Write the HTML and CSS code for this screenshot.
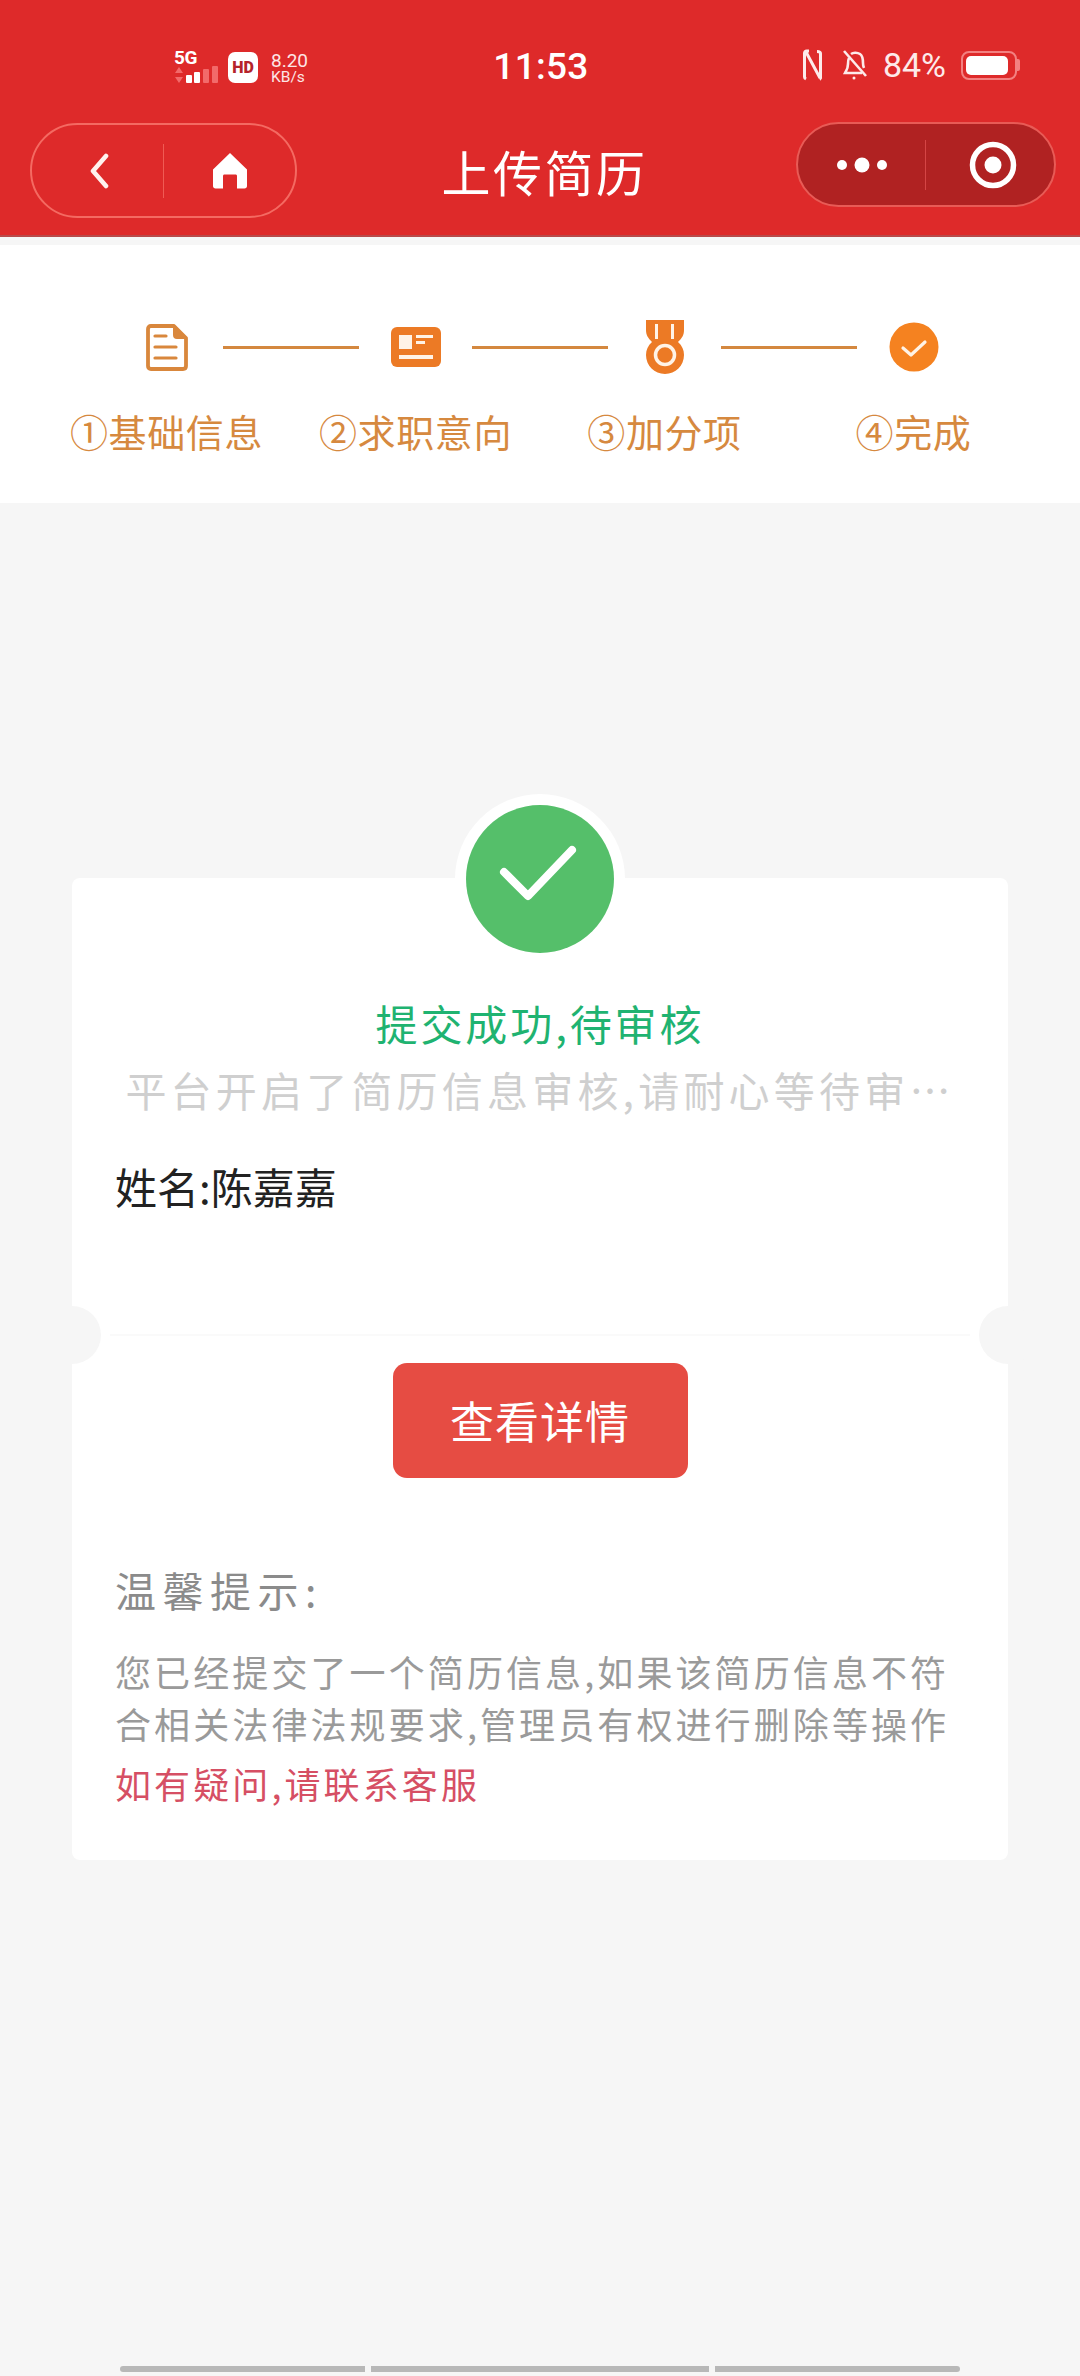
FILE: index.html
```html
<!DOCTYPE html>
<html lang="zh-CN">
<head>
<meta charset="utf-8">
<title>上传简历</title>
<link rel="stylesheet" href="styles.css">
</head>
<body>
<div class="page">
  <header class="header">
    <div class="status">
      <div class="status-left">
        <div class="net">
          <span class="net-label">5G</span>
          <svg class="net-bars" width="46" height="18" viewBox="0 0 46 18"><path d="M5 1l4 6H1zM5 17l4-6H1z" fill="#f26a6a"/><rect x="12" y="9" width="6" height="8" rx="1" fill="#fff"/><rect x="20" y="6" width="6" height="11" rx="1" fill="#fff"/><rect x="29" y="3" width="6" height="14" rx="1" fill="#f26a6a"/><rect x="38" y="0" width="6" height="17" rx="1" fill="#f26a6a"/></svg>
        </div>
        <span class="hd">HD</span>
        <div class="speed"><span class="speed-num">8.20</span><span class="speed-unit">KB/s</span></div>
      </div>
      <div class="time">11:53</div>
      <div class="status-right">
        <svg class="nfc" width="20" height="32" viewBox="0 0 20 32" fill="none" stroke="#fdeaea" stroke-width="3"><path d="M6 2H3.500C2.500 2 1.500 3 1.500 4v24c0 1 .5 1.500 1.500 2M3 3l14 26M14 2.500c1.500 0 3.500.5 3.500 2v23c0 1.500 0 2.500 .8 3"/></svg>
        <svg class="bell" width="26" height="30" viewBox="0 0 26 30" fill="none" stroke="#fdeaea" stroke-width="2.600"><path d="M2 1l22 25"/><path d="M7 8c-1 2-1 3-1 6 0 5-2 7-3 9h17M9 4c2-1.500 6-2 9 0 3 2 3 6 3 9 0 2 0 3 1 5"/><circle cx="12" cy="28" r="1.500" fill="#fdeaea" stroke="none"/></svg>
        <span class="pct">84%</span>
        <div class="battery"><span class="battery-fill"></span></div>
        <span class="battery-tip"></span>
      </div>
    </div>
    <nav class="nav">
      <div class="capsule-left">
        <span class="cap-cell cap-cell-first">
          <svg width="20" height="36" viewBox="0 0 20 36" fill="none" stroke="#fff2ee" stroke-width="4.600" stroke-linecap="round" stroke-linejoin="round"><path d="M17 3L4 18l13 15"/></svg>
        </span>
        <span class="cap-cell">
          <svg width="36" height="37" viewBox="0 0 36 37"><path d="M18 1L35 17.500V34c0 1.500-1 2.500-2.500 2.500H25V24c0-1-.6-1.500-1.500-1.500h-11c-1 0-1.500.6-1.500 1.500v12.500H3.500C2 36.500 1 35.500 1 34V17.500z" fill="#fff"/></svg>
        </span>
      </div>
      <h1 class="title">上传简历</h1>
      <div class="capsule-right">
        <span class="cap-cell cap-cell-first">
          <svg width="50" height="16" viewBox="0 0 50 16" fill="#fff"><circle cx="5" cy="8" r="5"/><circle cx="25" cy="8" r="7.500"/><circle cx="45" cy="8" r="5"/></svg>
        </span>
        <span class="cap-cell">
          <svg width="48" height="48" viewBox="0 0 48 48"><circle cx="24" cy="24" r="20.500" fill="none" stroke="#fff" stroke-width="5.500"/><circle cx="24" cy="24" r="8.500" fill="#fff"/></svg>
        </span>
      </div>
    </nav>
  </header>

  <section class="steps">
    <div class="step-icons">
      <span class="step-icon">
        <svg width="42" height="47" viewBox="0 0 42 47" fill="none" stroke="#d9873c" stroke-width="3.800" stroke-linejoin="round"><path d="M5 2h23l12 12v28c0 2-1 3-3 3H5c-2 0-3-1-3-3V5c0-2 1-3 3-3z"/><path d="M28 2v9c0 2 1 3 3 3h9z" fill="#d9873c" stroke-width="2"/><path d="M9 12h11M9 23h21M9 34h21" stroke-linecap="round" stroke-width="3.200"/></svg>
      </span>
      <span class="step-line"></span>
      <span class="step-icon">
        <svg width="50" height="40" viewBox="0 0 50 40"><rect width="50" height="40" rx="6" fill="#ec7a25"/><rect x="8" y="8" width="13" height="14" fill="#fff3e6"/><rect x="25" y="8" width="17" height="3" fill="#fff3e6"/><rect x="25" y="14" width="9" height="3" fill="#fff3e6"/><rect x="8" y="28" width="34" height="4" fill="#fff3e6"/></svg>
      </span>
      <span class="step-line"></span>
      <span class="step-icon">
        <svg width="38" height="54" viewBox="0 0 38 54"><path d="M0 0h38v10c0 5-2 8-6 12 4 3.500 6 8 6 13 0 10.500-8.500 19-19 19S0 45.500 0 35c0-5 2-9.500 6-13-4-4-6-7-6-12z" fill="#ec7a25"/><rect x="9" y="4" width="3" height="15" fill="#fff3e6"/><rect x="25" y="4" width="3" height="15" fill="#fff3e6"/><circle cx="19" cy="35" r="9.500" fill="none" stroke="#fff3e6" stroke-width="3.500"/></svg>
      </span>
      <span class="step-line"></span>
      <span class="step-icon">
        <svg width="50" height="50" viewBox="0 0 50 50"><circle cx="25" cy="25" r="24.500" fill="#f58220"/><path d="M14 26l8 7 14-13" fill="none" stroke="#fff3e6" stroke-width="3.200" stroke-linecap="round" stroke-linejoin="round"/></svg>
      </span>
    </div>
    <div class="step-labels">
      <span class="step-label">①基础信息</span>
      <span class="step-label">②求职意向</span>
      <span class="step-label">③加分项</span>
      <span class="step-label">④完成</span>
    </div>
  </section>

  <main class="card">
    <span class="badge-halo"></span>
    <span class="badge">
      <svg width="78" height="56" viewBox="0 0 78 56" fill="none" stroke="#fff" stroke-width="8" stroke-linecap="round" stroke-linejoin="round"><path d="M5 27l24 24L73 5"/></svg>
    </span>
    <div class="card-top">
      <h2 class="result-title">提交成功,待审核</h2>
      <p class="result-sub">平台开启了简历信息审核,请耐心等待审…</p>
      <p class="name">姓名:陈嘉嘉</p>
    </div>
    <div class="divider"></div>
    <div class="card-bottom">
      <button class="detail-btn" type="button">查看详情</button>
      <h3 class="tip-title">温馨提示:</h3>
      <p class="tip-body">您已经提交了一个简历信息,如果该简历信息不符合相关法律法规要求,管理员有权进行删除等操作</p>
      <p class="tip-link">如有疑问,请联系客服</p>
    </div>
  </main>

  <div class="scrollbar">
    <span class="seg seg-a"></span>
    <span class="seg seg-b"></span>
    <span class="seg seg-c"></span>
  </div>
</div>
</body>
</html>
```
FILE: styles.css
```css
* { box-sizing: border-box; margin: 0; padding: 0; }
html, body { width: 1080px; height: 2376px; overflow: hidden; }
body { background: #f6f6f6; font-family: "Noto Sans CJK SC", "Noto Sans", sans-serif; }
.page { width: 1080px; height: 2376px; display: flex; flex-direction: column; }

.header { height: 237px; background: #de2a2a; border-bottom: 2px solid #b84a4a; color: #fff; flex: none; }
.status { height: 122px; padding: 48px 60px 0; display: grid; grid-template-columns: 1fr auto 1fr; align-items: start; }
.status-left { display: flex; align-items: flex-start; margin-left: 114px; margin-right: auto; }
.net { width: 46px; margin-right: 8px; margin-top: 2px; display: flex; flex-direction: column; }
.net-label { font: 700 19px/16px Roboto, sans-serif; letter-spacing: -.5px; }
.net-bars { width: 46px; height: 18px; }
.hd { width: 30px; height: 31px; margin-top: 4px; background: #fff; color: #b5232a; border-radius: 7px; font: 900 16px/31px Roboto, sans-serif; text-align: center; }
.speed { margin-left: 13px; margin-top: 4px; display: flex; flex-direction: column; font-family: Roboto, sans-serif; color: #fde6e6; }
.speed-num { font-size: 19px; line-height: 18px; }
.speed-unit { font-size: 15.500px; line-height: 15px; }
.time { font: 500 37px/38px Roboto, sans-serif; letter-spacing: .3px; margin-left: 2px; }
.status-right { display: flex; align-items: center; height: 34px; margin-left: auto; }
.nfc { margin-right: 19px; }
.bell { margin-right: 15px; }
.pct { font: 400 34px/34px Roboto, sans-serif; margin-right: 15px; color: #fdeaea; }
.battery { width: 56px; height: 29px; border: 2px solid #f38181; border-radius: 8px; padding: 3px; }
.battery-fill { display: block; width: 42px; height: 19px; background: #fff; border-radius: 5px; }
.battery-tip { width: 3px; height: 12px; background: #f38181; border-radius: 0 2px 2px 0; margin-left: 0; }

.nav { height: 113px; padding: 0 24px 0 30px; display: grid; grid-template-columns: 1fr auto 1fr; position: relative; }
.capsule-left { justify-self: start; width: 267px; height: 95px; margin-top: 1px; border: 2px solid #f46a62; border-radius: 48px; display: flex; align-items: center; }
.capsule-right { justify-self: end; width: 260px; height: 85px; background: #b02222; border: 2px solid #e85b56; border-radius: 43px; display: flex; align-items: center; }
.cap-cell { flex: 1; height: 100%; display: flex; align-items: center; justify-content: center; }
.capsule-left .cap-cell-first { flex: none; width: 132px; height: 54px; border-right: 1px solid #ef5b54; padding-left: 57px; justify-content: flex-start; }
.capsule-right .cap-cell-first { flex: none; width: 128px; height: 50px; border-right: 1px solid #d54545; }
.capsule-right .cap-cell:last-child { padding-left: 6px; }
.title { font-size: 49px; font-weight: 400; line-height: 70px; letter-spacing: 2.500px; margin-top: 14px; margin-right: -3px; }

.steps { height: 258px; margin-top: 8px; background: #fff; flex: none; padding-top: 75px; }
.step-icons { display: flex; justify-content: center; align-items: center; gap: 26.500px; height: 54px; }
.step-icon { width: 60px; display: flex; justify-content: center; }
.step-line { width: 136px; height: 3px; background: #d4883f; }
.step-labels { display: grid; grid-template-columns: repeat(4, 249px); justify-content: center; margin-top: 32px; }
.step-label { text-align: center; color: #d6893f; font-size: 38px; line-height: 50px; letter-spacing: .6px; white-space: nowrap; }

.card { position: relative; flex: none; width: 936px; height: 982px; margin: 375px 0 0 72px; background: #fff; border-radius: 8px; }
.badge-halo { position: absolute; left: 383px; top: -84px; width: 170px; height: 170px; border-radius: 50%; background: #fff; }
.badge { position: absolute; left: 394px; top: -73px; width: 148px; height: 148px; padding: 0 4px 12px 0; border-radius: 50%; background: #55bf6a; display: flex; align-items: center; justify-content: center; }
.card-top { position: relative; height: 456px; padding: 115px 43px 0; text-align: center; }
.result-title { font-size: 42px; font-weight: 400; line-height: 60px; letter-spacing: 2.900px; color: #1fb371; }
.result-sub { margin-top: 6px; font-size: 41px; line-height: 60px; letter-spacing: 4.200px; color: #cfcfcf; white-space: nowrap; }
.name { margin-top: 37px; text-align: left; font-size: 42px; line-height: 60px; color: #222; }
.divider { position: relative; height: 2px; margin: 0 38px; background: #fafafa; }
.divider::before, .divider::after { content: ""; position: absolute; top: -28px; width: 58px; height: 58px; border-radius: 50%; background: #f6f6f6; }
.divider::before { left: -67px; }
.divider::after { right: -67px; }
.card-bottom { padding: 27px 43px 0; display: flex; flex-direction: column; }
.detail-btn { align-self: center; width: 295px; height: 115px; border: 0; border-radius: 14px; background: #e64c43; color: #fff; font: 400 44px/115px "Noto Sans CJK SC", sans-serif; letter-spacing: 1px; }
.tip-title { margin-top: 81px; font-size: 41px; font-weight: 400; line-height: 60px; letter-spacing: 6.500px; color: #8b8b8b; }
.tip-body { margin-top: 26px; font-size: 36px; line-height: 52px; letter-spacing: 3.100px; color: #9a9a9a; }
.tip-link { margin-top: 4px; font-size: 36px; line-height: 60px; letter-spacing: 3.100px; color: #d64f64; }

.scrollbar { flex: none; display: flex; gap: 6px; margin: 506px 0 0 120px; }
.seg { height: 6px; background: #b8b8b8; }
.seg-a { width: 245px; border-radius: 3px 0 0 3px; }
.seg-b { width: 338px; }
.seg-c { width: 245px; border-radius: 0 3px 3px 0; }
```
